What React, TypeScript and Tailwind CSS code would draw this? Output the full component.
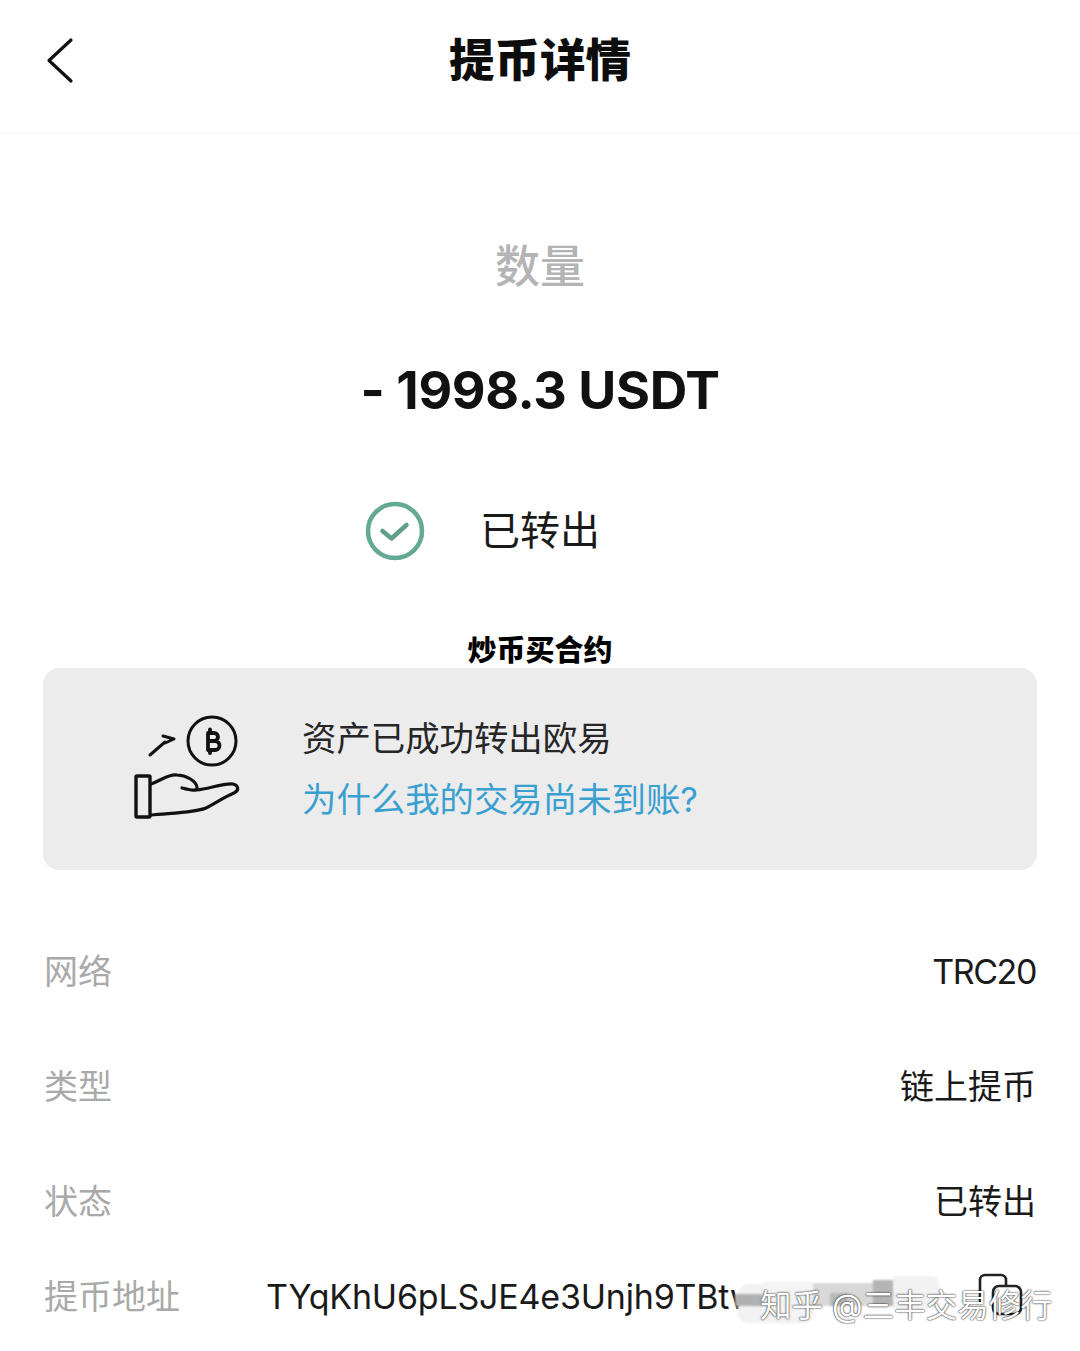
const CJK = "font-['Inter','Noto_Sans_CJK_SC',sans-serif]";

function Row({ label, value, className, valueClass }: { label: string; value: string; className: string; valueClass?: string }) {
  return (
    <div className={`flex items-center justify-between h-[50px] ${className}`}>
      <span className="text-[34px] leading-[50px] text-[#a9a9a9]">{label}</span>
      <span className={`text-[34px] leading-[50px] text-[#1a1a1a] ${valueClass ?? ""}`}>{value}</span>
    </div>
  );
}

export default function App() {
  return (
    <div className={`relative w-[1080px] h-[1351px] overflow-hidden bg-white ${CJK}`}>
      <header className="relative flex items-center justify-center h-[133px] border-b border-[#f3f3f3]">
        <svg className="absolute left-[44px] top-[36px]" width="32" height="50" viewBox="0 0 32 50" fill="none">
          <path d="M27 4 L5 24.5 L27 45" stroke="#111" strokeWidth="3.2" strokeLinecap="round" strokeLinejoin="round" />
        </svg>
        <h1 className="text-[45.5px] leading-[60px] font-black text-[#0d0d0d] -mt-[10px]">提币详情</h1>
      </header>

      <div className="flex flex-col items-center">
        <div className="mt-[101px] text-[45px] leading-[66px] font-medium text-[#b4b4b4]">数量</div>
        <div className="mt-[59px] text-[52px] leading-[64px] font-bold tracking-[-0.4px] text-[#111]">- 1998.3 USDT</div>
        <div className="mt-[73px] flex items-center h-[70px] w-[350px] ml-[-2px]">
          <svg width="60" height="60" viewBox="0 0 60 60" fill="none" className="mr-[55px] ml-[1px]">
            <circle cx="30" cy="30" r="27" stroke="#63a994" strokeWidth="4.5" />
            <path d="M17.5 30 L26.5 37.5 L41.5 24" stroke="#5f9f8c" strokeWidth="4.5" strokeLinecap="round" strokeLinejoin="round" />
          </svg>
          <span className="text-[40px] leading-[60px] text-[#1a1a1a]">已转出</span>
        </div>
        <div className="mt-[65px] text-[29px] leading-[40px] font-black text-black">炒币买合约</div>
      </div>

      <section className="mx-[43px] mt-[-3px] h-[202px] rounded-[16px] bg-[#ececed] flex items-center">
        <svg width="112" height="108" viewBox="0 0 110 108" fill="none" className="ml-[90px] mr-[57px]" stroke="#111" strokeLinecap="round" strokeLinejoin="round">
          <circle cx="78" cy="26" r="24" strokeWidth="3" />
          <path d="M74 18 h6 a4 4 0 0 1 0 8 h-6 z M74 26 h7 a4.5 4.5 0 0 1 0 9 h-7 z M74 18 v17 M76 14.5 v3 M76 35 v3" strokeWidth="3.8" />
          <path d="M16 40 L31 27 M29 21 L40 24 L31 28" strokeWidth="3" />
          <rect x="2" y="61" width="14" height="41" rx="1" strokeWidth="3.4" />
          <path d="M17 69 C28 65 34 59 43 60 C52 60 62 66 63 72 C64 77 56 75 48 73 M63 75 C74 74 90 68 99 69 C104 70 106 75 100 78 C90 82 82 88 72 93 C60 98 35 98 17 100" strokeWidth="3.2" />
        </svg>
        <div className="flex flex-col gap-[11px] mt-[1px]">
          <div className="text-[34.4px] leading-[50px] text-[#262626]">资产已成功转出欧易</div>
          <div className="text-[34.4px] leading-[50px] text-[#3aa0d0]">为什么我的交易尚未到账?</div>
        </div>
      </section>

      <div className="px-[44px]">
        <Row label="网络" value="TRC20" className="mt-[77px]" valueClass="tracking-[-1.4px]" />
        <Row label="类型" value="链上提币" className="mt-[65px]" />
        <Row label="状态" value="已转出" className="mt-[65px]" />
        <div className="mt-[45px] flex items-center h-[50px]">
          <span className="text-[34px] leading-[50px] text-[#a9a9a9] w-[222px] shrink-0">提币地址</span>
          <span className="text-[34px] leading-[50px] tracking-[-0.2px] text-[#1a1a1a] whitespace-nowrap">TYqKhU6pLSJE4e3Unjh9TBtw</span>
        </div>
      </div>

      <svg className="absolute left-[976px] top-[1272px]" width="50" height="50" viewBox="0 0 50 50" fill="none" stroke="#222" strokeWidth="2.6">
        <path d="M4 30 V8 a5 5 0 0 1 5 -5 H25 a5 5 0 0 1 5 5 V14" />
        <rect x="17" y="14" width="28" height="28" rx="6" />
      </svg>

      <div className="absolute left-[735px] top-[1276px] w-[210px] h-[48px] blur-[1px]">
        <div className="absolute left-[3px] top-[8px] w-[76px] h-[39px] rounded-[10px] bg-[#f1f1f1]" />
        <div className="absolute left-0 top-[18px] w-[27px] h-[12px] bg-[#b0b0b0]" />
        <div className="absolute left-[27px] top-[6px] w-[50px] h-[36px] bg-[#f4f4f4]" />
        <div className="absolute left-[78px] top-[7px] w-[60px] h-[23px] bg-[#d8d8d8]" />
        <div className="absolute left-[95px] top-[17px] w-[18px] h-[13px] bg-[#b8b8b8]" />
        <div className="absolute left-[138px] top-[4px] w-[20px] h-[26px] bg-[#b4b4b4]" />
        <div className="absolute left-[158px] top-0 w-[46px] h-[32px] rounded-r-[8px] bg-[#f2f2f2]" />
      </div>
      <div className="absolute left-[760px] top-[1282px] text-[31.6px] leading-[48px] text-white whitespace-nowrap [text-shadow:0_0_2px_rgba(0,0,0,0.9),0_0_1px_rgba(0,0,0,0.6)]">知乎 @三丰交易修行</div>
    </div>
  );
}
